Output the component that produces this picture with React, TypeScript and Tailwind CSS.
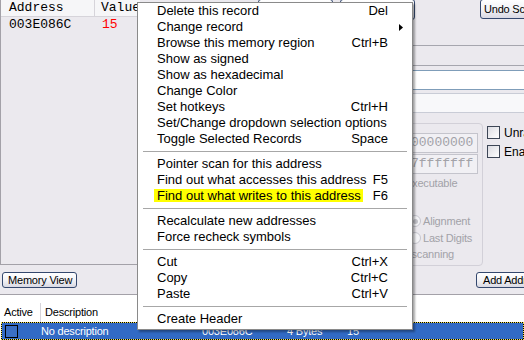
import React from "react";

type Item = { label: string; keys?: string; sub?: boolean; mark?: boolean } | null;

const menuItems: Item[] = [
  { label: "Delete this record", keys: "Del" },
  { label: "Change record", sub: true },
  { label: "Browse this memory region", keys: "Ctrl+B" },
  { label: "Show as signed" },
  { label: "Show as hexadecimal" },
  { label: "Change Color" },
  { label: "Set hotkeys", keys: "Ctrl+H" },
  { label: "Set/Change dropdown selection options" },
  { label: "Toggle Selected Records", keys: "Space" },
  null,
  { label: "Pointer scan for this address" },
  { label: "Find out what accesses this address", keys: "F5" },
  { label: "Find out what writes to this address", keys: "F6", mark: true },
  null,
  { label: "Recalculate new addresses" },
  { label: "Force recheck symbols" },
  null,
  { label: "Cut", keys: "Ctrl+X" },
  { label: "Copy", keys: "Ctrl+C" },
  { label: "Paste", keys: "Ctrl+V" },
  null,
  { label: "Create Header" },
];

const XpButton = ({ children, className }: { children?: React.ReactNode; className?: string }) => (
  <div
    className={
      "flex items-center shrink-0 border border-[#34486e] rounded-[3px] bg-linear-to-b from-white via-[#f3f3f6] to-[#d9d9e3] text-[11px] tracking-[-0.2px] text-black whitespace-nowrap overflow-hidden " +
      (className ?? "")
    }
  >
    {children}
  </div>
);

const Chevron = ({ color }: { color: string }) => (
  <svg width="9" height="6" viewBox="0 0 9 6">
    <path d="M1 1 L4.5 4.5 L8 1" fill="none" stroke={color} strokeWidth="2" />
  </svg>
);

const Check = ({ className }: { className?: string }) => (
  <div
    className={
      "w-[13px] h-[13px] shrink-0 border border-[#3d4656] bg-linear-to-br from-[#dcdce2] to-white " + (className ?? "")
    }
  />
);

const ContextMenu = () => (
  <div className="absolute left-[137px] top-[2px] w-[276px] bg-white border border-[#8a8a8a] pb-[2px] shadow-[2px_2px_2px_rgba(0,0,0,0.35)] text-[13px] text-black">
    {menuItems.map((it, i) =>
      it === null ? (
        <div key={i} className="h-[9px] flex items-center px-[5px]">
          <div className="h-px w-full bg-[#a7a7a7]" />
        </div>
      ) : (
        <div key={i} className="relative h-[16px] leading-[16px] flex justify-between pl-[19px] pr-[24px] whitespace-nowrap">
          <div className="relative">
            {it.mark && <div className="absolute -left-[3px] -right-[2px] top-[1px] h-[13px] bg-[#ffff00]" />}
            <span className="relative">{it.label}</span>
          </div>
          {it.keys && <span>{it.keys}</span>}
          {it.sub && (
            <svg className="absolute right-[9px] top-[5px]" width="4" height="7" viewBox="0 0 4 7">
              <polygon points="0,0 4,3.5 0,7" fill="#000" />
            </svg>
          )}
        </div>
      )
    )}
  </div>
);

export default function App() {
  return (
    <div className="relative w-[524px] h-[340px] overflow-hidden bg-[#ebe9ee] [font-family:'Liberation_Sans',Arial,sans-serif] text-black">
      <div className="flex h-[267px]">
        {/* address list */}
        <div className="w-[140px] h-[265px] shrink-0 border-l border-b border-[#a3a1a8] flex flex-col [font-family:'Liberation_Mono',monospace] text-[13px]">
          <div className="h-[17px] flex bg-[#f6f6f8] border-b border-[#d6d4da] leading-[16px]">
            <div className="w-[95px] pl-[8px] border-r border-[#d6d4da]">Address</div>
            <div className="pl-[6px]">Value</div>
          </div>
          <div className="h-[16px] flex leading-[16px]">
            <div className="w-[95px] pl-[8px]">003E086C</div>
            <div className="pl-[6px] text-[#ff0000]">15</div>
          </div>
        </div>

        {/* scan panel */}
        <div className="flex-1 flex flex-col">
          <div className="h-[45px] flex items-start">
            <XpButton className="-mt-px ml-[118px] w-[75px] h-[20px] justify-center">First Scan</XpButton>
            <XpButton className="-mt-px ml-[7px] w-[75px] h-[21px] justify-center">Next Scan</XpButton>
            <XpButton className="-mt-px ml-[65px] w-[80px] h-[20px] pl-[3px]">Undo Scan</XpButton>
          </div>
          <div className="h-[21px] ml-[10px] -mr-[4px] border border-[#a6a6ae]" />
          <div className="mt-[4px] h-[20px] w-[250px] ml-auto mr-[42px] border border-[#7f9db9] bg-white flex justify-end p-px">
            <div className="w-[16px] h-full rounded-[2px] border border-[#aebfe6] bg-linear-to-b from-[#e4ecfd] to-[#b6c8f1] flex items-center justify-center">
              <Chevron color="#4d6185" />
            </div>
          </div>
          <div className="mt-[3px] h-[20px] w-[250px] ml-auto mr-[42px] border border-[#c9ccd6] bg-[#f8f8fa] flex justify-end p-px">
            <div className="w-[16px] h-full rounded-[2px] border border-[#e2e6f0] bg-[#f3f4f8] flex items-center justify-center">
              <Chevron color="#c3cbdc" />
            </div>
          </div>
          <div className="mt-[10px] h-[143px] flex">
            <div className="ml-[110px] w-[233px] h-[143px] shrink-0 rounded-[4px] border border-[#d2d0d8] flex flex-col text-[11px] tracking-[-0.2px] text-[#a2a2a8]">
              <div className="pt-[9px] pr-[4px] flex flex-col items-end [font-family:'Liberation_Mono',monospace] text-[13px] tracking-normal">
                <div className="w-[72px] h-[20px] pl-[4px] border border-[#c4c4cc] bg-[#f1f0f4] leading-[18px]">00000000</div>
                <div className="mt-px w-[72px] h-[20px] pl-[4px] border border-[#c4c4cc] bg-[#f1f0f4] leading-[18px]">7fffffff</div>
              </div>
              <div className="mt-[2px] h-[14px] pl-[137px] flex items-center gap-[4px]">
                <Check className="opacity-50" />
                <span>Executable</span>
              </div>
              <div className="mt-[24px] h-[14px] pl-[158px] flex items-center gap-[2px]">
                <div className="w-[12px] h-[12px] rounded-full border border-[#c6c6ce] bg-[#f3f3f6] flex items-center justify-center">
                  <div className="w-[5px] h-[5px] rounded-full bg-[#c2c2c8]" />
                </div>
                <span>Alignment</span>
              </div>
              <div className="mt-[3px] h-[14px] pl-[158px] flex items-center gap-[2px]">
                <div className="w-[12px] h-[12px] rounded-full border border-[#c6c6ce] bg-[#f3f3f6]" />
                <span>Last Digits</span>
              </div>
              <div className="mt-[2px] h-[14px] w-[203px] flex items-center justify-end whitespace-nowrap">
                Pause the game while scanning
              </div>
            </div>
            <div className="ml-[4px] pt-[3px] flex flex-col gap-[6px] text-[12px] whitespace-nowrap">
              <div className="h-[13px] flex items-center gap-[4px]">
                <Check />
                <span>Unrandomizer</span>
              </div>
              <div className="h-[13px] flex items-center gap-[4px]">
                <Check />
                <span>Enable Speedhack</span>
              </div>
            </div>
          </div>
        </div>
      </div>

      {/* toolbar */}
      <div className="h-[27px] flex items-start pt-[5px]">
        <XpButton className="ml-[2px] w-[75px] h-[16px] pl-[5px]">Memory View</XpButton>
        <XpButton className="ml-[399px] w-[130px] h-[16px] pl-[6px]">Add Address Manually</XpButton>
      </div>
      <div className="h-px bg-[#a3a1a8]" />

      {/* cheat table */}
      <div className="h-[45px] bg-white flex flex-col text-[11px] tracking-[-0.2px]">
        <div className="h-[27px] pt-[8px] flex">
          <div className="w-[41px] pl-[4px] border-r border-[#d6d4da] flex items-center">Active</div>
          <div className="pl-[4px] flex items-center">Description</div>
        </div>
        <div className="ml-px h-[18px] bg-black">
          <div className="h-full border border-dotted border-[#f2e24e] bg-[#316ac5] bg-clip-padding flex items-center text-white whitespace-nowrap">
            <div className="ml-[3px] w-[13px] h-[13px] border border-black bg-[#3a6fc4]" />
            <span className="ml-[23px] w-[161px]">No description</span>
            <span className="w-[85px]">003E086C</span>
            <span className="w-[60px]">4 Bytes</span>
            <span>15</span>
          </div>
        </div>
      </div>

      <ContextMenu />
    </div>
  );
}
